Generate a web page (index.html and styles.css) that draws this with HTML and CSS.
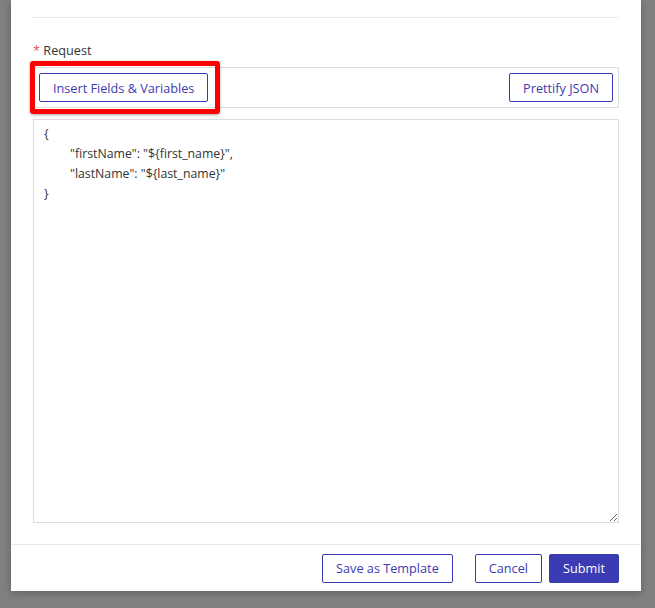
FILE: index.html
```html
<!DOCTYPE html>
<html lang="en">
<head>
  <meta charset="UTF-8">
  <title>Request</title>
  <link rel="stylesheet" href="styles.css">
</head>
<body>
<div class="modal">
  <div class="modal-body">
    <div class="top-rule"></div>
    <div class="field">
      <label class="field-label"><span class="req">*</span> Request</label>
      <div class="toolbar">
        <button class="btn btn-insert">Insert Fields &amp; Variables</button>
        <button class="btn">Prettify JSON</button>
        <div class="highlight"></div>
      </div>
      <textarea class="editor" spellcheck="false">{
	"firstName": "${first_name}",
	"lastName": "${last_name}"
}</textarea>
    </div>
  </div>
  <div class="modal-footer">
    <button class="btn btn-template">Save as Template</button>
    <button class="btn btn-cancel">Cancel</button>
    <button class="btn btn-primary">Submit</button>
  </div>
</div>
</body>
</html>
```

FILE: styles.css
```css
html, body { margin: 0; padding: 0; height: 100%; }
body { background: #808080; font-family: "Open Sans", sans-serif; color: #333; overflow: hidden; }
.modal { margin-left: 11px; width: 630px; height: 591px; background: #fff; box-shadow: 0 2px 8px rgba(0,0,0,0.25); display: flex; flex-direction: column; }
.modal-body { padding: 0 22px; flex: 1; }
.top-rule { height: 17px; border-bottom: 1px solid #e9e9e9; }
.field { padding-top: 23px; }
.field-label { display: block; font-size: 12.7px; line-height: 18px; margin-bottom: 8px; }
.req { color: #e05252; }
.toolbar { position: relative; display: flex; justify-content: space-between; align-items: center; border: 1px solid #ddd; padding: 5px; height: 29px; }
.highlight { position: absolute; left: -4px; top: -7px; width: 180px; height: 43px; border: 5px solid #ff0000; border-radius: 3px; box-shadow: 0 1px 3px rgba(0,0,0,0.35); pointer-events: none; }
.btn { font-family: "Open Sans", sans-serif; font-size: 12.7px; height: 29px; padding: 0 13px; background: #fff; color: #3b3bb3; border: 1px solid #3b3bb3; border-radius: 2px; cursor: pointer; }
.btn-primary { background: #3b3bb3; color: #fff; }
.editor { display: block; box-sizing: border-box; width: 100%; height: 404px; margin-top: 11px; border: 1px solid #ddd; padding: 4px 10px; font-family: "Open Sans", sans-serif; font-size: 12.3px; line-height: 20px; color: #333; tab-size: 26px; resize: vertical; outline: none; }
.modal-footer { display: flex; justify-content: flex-end; align-items: center; gap: 7px; border-top: 1px solid #e9e9e9; padding: 0 22px; height: 46px; }
.btn-template { margin-right: 15px; }
```
